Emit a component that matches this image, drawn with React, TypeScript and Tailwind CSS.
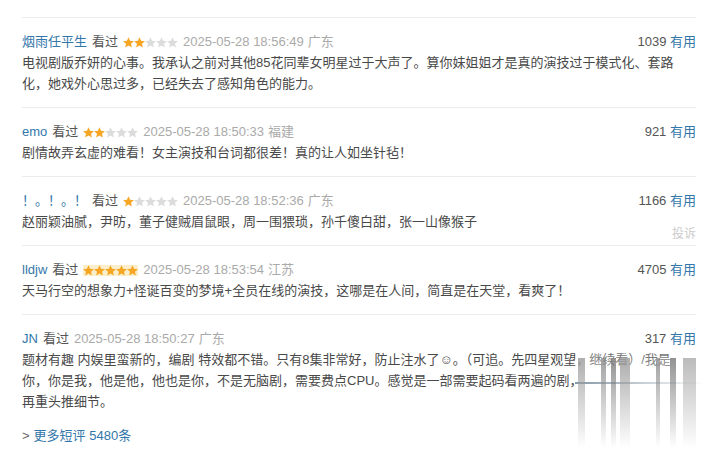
import React from "react";

type Review = {
  user: string;
  stars: number;
  date: string;
  place: string;
  useful: string;
  lines: string[];
  report?: boolean;
  starBg?: boolean;
};

const reviews: Review[] = [
  {
    user: "烟雨任平生",
    stars: 2,
    date: "2025-05-28 18:56:49",
    place: "广东",
    useful: "1039",
    lines: [
      "电视剧版乔妍的心事。我承认之前对其他85花同辈女明星过于大声了。算你妹姐姐才是真的演技过于模式化、套路",
      "化，她戏外心思过多，已经失去了感知角色的能力。",
    ],
  },
  {
    user: "emo",
    stars: 2,
    date: "2025-05-28 18:50:33",
    place: "福建",
    useful: "921",
    lines: ["剧情故弄玄虚的难看！女主演技和台词都很差！真的让人如坐针毡！"],
  },
  {
    user: "！。！。！",
    stars: 1,
    date: "2025-05-28 18:52:36",
    place: "广东",
    useful: "1166",
    lines: ["赵丽颖油腻，尹昉，董子健贼眉鼠眼，周一围猥琐，孙千傻白甜，张一山像猴子"],
    report: true,
  },
  {
    user: "lldjw",
    stars: 5,
    date: "2025-05-28 18:53:54",
    place: "江苏",
    useful: "4705",
    lines: ["天马行空的想象力+怪诞百变的梦境+全员在线的演技，这哪是在人间，简直是在天堂，看爽了！"],
    starBg: true,
  },
  {
    user: "JN",
    stars: 0,
    date: "2025-05-28 18:50:27",
    place: "广东",
    useful: "317",
    lines: [
      "题材有趣 内娱里蛮新的，编剧 特效都不错。只有8集非常好，防止注水了☺。（可追。先四星观望，继续看）/我是",
      "你，你是我，他是他，他也是你，不是无脑剧，需要费点CPU。感觉是一部需要起码看两遍的剧，",
      "再重头推细节。",
    ],
  },
];

const Star = ({ on }: { on: boolean }) => (
  <svg width="11" height="11" viewBox="1 1 22 22">
    <polygon
      points="12,1.5 15.1,8.6 22.8,9.3 17,14.4 18.7,22 12,18 5.3,22 7,14.4 1.2,9.3 8.9,8.6"
      fill={on ? "#f6a623" : "#dcdcdc"}
    />
  </svg>
);

const Stars = ({ n, bg }: { n: number; bg?: boolean }) => (
  <span className={`inline-flex items-center ${bg ? "bg-[#fbeecb]" : ""}`}>
    {[0, 1, 2, 3, 4].map((i) => (
      <Star key={i} on={i < n} />
    ))}
  </span>
);

// vertical streaks of the watermark smear, x offsets from the smear box
const streaks = [
  { x: 3, w: 7, c: "from-[#9a9a9a]" },
  { x: 26, w: 5, c: "from-[#8a8a8a]" },
  { x: 36, w: 5, c: "from-[#777]" },
  { x: 45, w: 10, c: "from-[#999]" },
  { x: 81, w: 4, c: "from-[#888]" },
  { x: 95, w: 6, c: "from-[#777]" },
  { x: 108, w: 13, c: "from-[#aaa]" },
];

export default function App() {
  return (
    <div
      className="w-[726px] h-[455px] bg-white overflow-hidden relative"
      style={{ fontFamily: '"Liberation Sans", Arial, "Noto Sans CJK SC", sans-serif' }}
    >
      <div className="ml-[22px] w-[674px] pt-[17px]">
        {reviews.map((r) => (
          <div key={r.user} className="relative border-t border-[#ececec] pt-[14px] pb-[13px] last:pb-0">
            <div className="flex items-center justify-between h-[20px] text-[13px]">
              <div className="flex items-center gap-[5px] whitespace-nowrap">
                <span className="text-[#3377aa]">{r.user}</span>
                <span className="text-[#555]">看过</span>
                {r.stars > 0 && <Stars n={r.stars} bg={r.starBg} />}
                <span className="text-[#aaa]">{r.date}</span>
                <span className="text-[#aaa] -ml-[1px]">{r.place}</span>
              </div>
              <div className="whitespace-nowrap">
                <span className="text-[#555]">{r.useful}</span>{" "}
                <span className="text-[#3377aa]">有用</span>
              </div>
            </div>
            <div className="text-[13px] leading-[21px] text-[#494949] whitespace-nowrap">
              {r.lines.map((l, i) => (
                <div key={i}>{l}</div>
              ))}
            </div>
            {r.report && (
              <span className="absolute right-0 bottom-[2px] text-[12px] text-[#ccc]">投诉</span>
            )}
          </div>
        ))}
        <div className="mt-[1px] h-[20px] flex items-center text-[13px]">
          <span className="text-[#666]">&gt;</span>
          <span className="ml-[4px] text-[#3377aa]">更多短评 5480条</span>
        </div>
      </div>

      {/* watermark smear over the last review */}
      <div className="absolute left-[575px] top-[352px] w-[130px] h-[100px] bg-gradient-to-b from-white/20 via-white/95 to-white">
        <div className="absolute left-0 right-0 top-[30px] h-[2px] bg-gradient-to-r from-[#8899aa] to-transparent" />
        {streaks.map((s, i) => (
          <div
            key={i}
            className={`absolute top-[6px] h-[90px] bg-gradient-to-b ${s.c} to-transparent opacity-80`}
            style={{ left: s.x, width: s.w }}
          />
        ))}
      </div>
    </div>
  );
}
